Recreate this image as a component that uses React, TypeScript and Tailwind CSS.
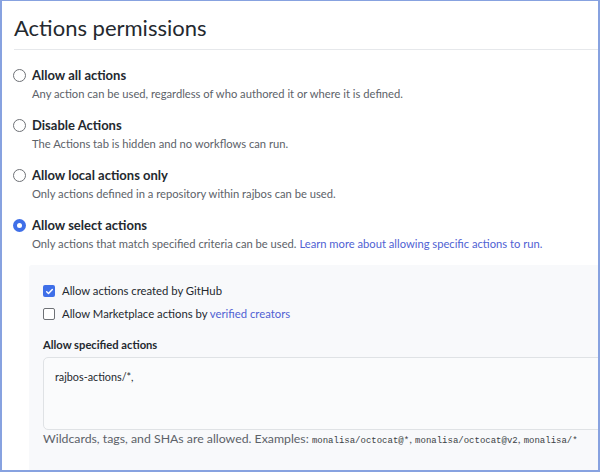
import React from 'react';

const OPCIONES = [
  { id: 'all', label: 'Allow all actions', desc: 'Any action can be used, regardless of who authored it or where it is defined.' },
  { id: 'disable', label: 'Disable Actions', desc: 'The Actions tab is hidden and no workflows can run.' },
  { id: 'local', label: 'Allow local actions only', desc: 'Only actions defined in a repository within rajbos can be used.' },
];

const MONO = { fontFamily: '"Liberation Mono", monospace' };

function Radio({ checked }: { checked?: boolean }) {
  return checked ? (
    <span className="w-[13px] h-[13px] rounded-full bg-[#3f6fe8] flex items-center justify-center flex-shrink-0">
      <span className="w-[5px] h-[5px] rounded-full bg-white" />
    </span>
  ) : (
    <span className="w-[13px] h-[13px] rounded-full border border-[#6e7176] bg-white flex-shrink-0" />
  );
}

export default function App() {
  return (
    <div
      className="w-[600px] h-[474px] bg-white overflow-hidden"
      style={{ fontFamily: 'Lato, "Open Sans", sans-serif' }}
    >
      <div className="w-[600px] h-[472px] border-t border-l-2 border-r-2 border-b-2 border-[#87a2e0] overflow-hidden relative text-[#24292f]">
        <h1 className="pl-3 pt-[12px] h-[48px] text-[22px] leading-[30px] text-[#24292f]">
          Actions permissions
        </h1>
        <div className="ml-3 h-px bg-[#e6e8eb]" />

        <div className="pt-[16px] pl-[11px]">
          {OPCIONES.map((o) => (
            <div key={o.id} className="h-[50px]">
              <div className="flex items-center gap-[6px] h-[19px]">
                <Radio />
                <span className="text-[13px] font-bold leading-[19px]">{o.label}</span>
              </div>
              <p className="pl-[19px] text-[11.2px] leading-[17px] text-[#5c6269]">{o.desc}</p>
            </div>
          ))}
          <div className="h-[50px]">
            <div className="flex items-center gap-[6px] h-[19px]">
              <Radio checked />
              <span className="text-[13px] font-bold leading-[19px]">Allow select actions</span>
            </div>
            <p className="pl-[19px] text-[11.2px] leading-[17px] text-[#5c6269] whitespace-nowrap">
              Only actions that match specified criteria can be used.{' '}
              <span className="text-[#5062d3]">Learn more about allowing specific actions to run.</span>
            </p>
          </div>
        </div>

        <div className="ml-[27px] mt-[-1px] h-[220px] bg-[#f8f9fb] rounded-tl-[3px] pl-[14px] pt-[17px]">
          <div className="flex items-center gap-[7px] h-[18px]">
            <span className="w-[12px] h-[12px] rounded-[2px] bg-[#3f6fe8] flex items-center justify-center">
              <svg width="9" height="9" viewBox="0 0 16 16" fill="none" stroke="white" strokeWidth="2.6" strokeLinecap="round" strokeLinejoin="round">
                <path d="M3 8.5l3.2 3.2L13 4.5" />
              </svg>
            </span>
            <span className="text-[11.3px] leading-[18px]">Allow actions created by GitHub</span>
          </div>
          <div className="flex items-center gap-[7px] h-[18px] mt-[5px]">
            <span className="w-[12px] h-[12px] rounded-[2px] border border-[#6e7176] bg-white" />
            <span className="text-[11.3px] leading-[18px]">
              Allow Marketplace actions by <span className="text-[#5062d3]">verified creators</span>
            </span>
          </div>
          <p className="mt-[14px] text-[11.2px] font-bold leading-[16px]">Allow specified actions</p>
          <div className="mt-[4px] w-[600px] h-[73px] border border-[#dfe2e5] rounded-[5px] bg-[#fafbfc] pl-[11px] pt-[11px] text-[10.8px] leading-[16px]">
            rajbos-actions/*,
          </div>
          <p className="mt-[1px] text-[12.3px] leading-[16px] text-[#5c6269] whitespace-nowrap">
            Wildcards, tags, and SHAs are allowed. Examples:{' '}
            <code className="text-[#3a3f45] text-[9px]" style={MONO}>monalisa/octocat@*</code>,{' '}
            <code className="text-[#3a3f45] text-[9px]" style={MONO}>monalisa/octocat@v2</code>,{' '}
            <code className="text-[#3a3f45] text-[9px]" style={MONO}>monalisa/*</code>
          </p>
        </div>
      </div>
    </div>
  );
}
